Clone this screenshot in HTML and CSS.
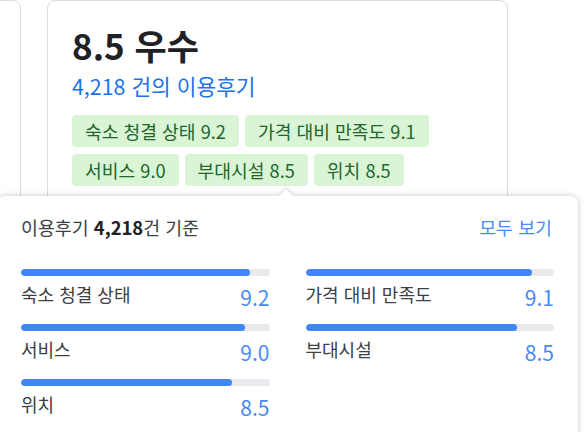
FILE: index.html
```html
<!DOCTYPE html>
<html lang="ko">
<head>
<meta charset="utf-8">
<link rel="stylesheet" href="styles.css">
</head>
<body>
<div class="stage">
  <div class="cards">
    <div class="card card-prev"></div>
    <div class="card card-main">
      <div class="title">8.5 우수</div>
      <div class="count">4,218 건의 이용후기</div>
      <div class="tags">
        <span class="tag">숙소 청결 상태 9.2</span>
        <span class="tag">가격 대비 만족도 9.1</span>
        <span class="tag">서비스 9.0</span>
        <span class="tag">부대시설 8.5</span>
        <span class="tag">위치 8.5</span>
      </div>
    </div>
  </div>

  <div class="popover">
    <div class="arrow"></div>
    <div class="pop-head">
      <div class="basis">이용후기 <b>4,218</b>건 기준</div>
      <a class="see-all">모두 보기</a>
    </div>
    <div class="scores">
      <div class="score">
        <div class="track"><div class="fill" style="width:92%"></div></div>
        <div class="row"><span class="label">숙소 청결 상태</span><span class="value">9.2</span></div>
      </div>
      <div class="score">
        <div class="track"><div class="fill" style="width:91%"></div></div>
        <div class="row"><span class="label">가격 대비 만족도</span><span class="value">9.1</span></div>
      </div>
      <div class="score">
        <div class="track"><div class="fill" style="width:90%"></div></div>
        <div class="row"><span class="label">서비스</span><span class="value">9.0</span></div>
      </div>
      <div class="score">
        <div class="track"><div class="fill" style="width:85%"></div></div>
        <div class="row"><span class="label">부대시설</span><span class="value">8.5</span></div>
      </div>
      <div class="score">
        <div class="track"><div class="fill" style="width:85%"></div></div>
        <div class="row"><span class="label">위치</span><span class="value">8.5</span></div>
      </div>
    </div>
  </div>
</div>
</body>
</html>
```
FILE: styles.css
```css
* { box-sizing: border-box; }
html, body {
  margin: 0;
  padding: 0;
  background: #fff;
  overflow: hidden;
}
body {
  font-family: "Noto Sans CJK KR", "Noto Sans", sans-serif;
  color: #3c4043;
}
.stage {
  position: relative;
  width: 584px;
  height: 432px;
  overflow: hidden;
}
.cards {
  display: flex;
  gap: 26px;
  margin-left: -179px;
}
.card {
  border: 1px solid #dadce0;
  border-radius: 8px;
  background: #fff;
  height: 260px;
}
.card-prev {
  width: 200px;
  flex: none;
}
.card-main {
  width: 461px;
  flex: none;
  padding: 18px 24px 0 24px;
}
.title {
  font-size: 35px;
  font-weight: 700;
  line-height: 52px;
  color: #202124;
}
.count {
  font-size: 21.4px;
  line-height: 30px;
  color: #1a73e8;
}
.tags {
  display: flex;
  flex-wrap: wrap;
  gap: 7px 6px;
  margin-top: 14px;
}
.tag {
  display: inline-flex;
  align-items: center;
  height: 32px;
  padding: 0 13px;
  border-radius: 4px;
  background: #d9f5d6;
  color: #22652b;
  font-size: 18.2px;
}
.popover {
  position: absolute;
  top: 196px;
  left: -3px;
  width: 581px;
  height: 260px;
  background: #fff;
  border-radius: 8px;
  box-shadow: 0 0 6px rgba(0, 0, 0, 0.22);
  padding: 19px 24px 0 24px;
}
.arrow {
  position: absolute;
  top: -5px;
  left: 284px;
  width: 10px;
  height: 10px;
  background: #fff;
  transform: rotate(45deg);
  box-shadow: -2px -2px 3px rgba(0, 0, 0, 0.1);
}
.pop-head {
  position: relative;
  display: flex;
  justify-content: space-between;
  align-items: center;
  font-size: 18.4px;
  line-height: 24px;
  padding-right: 2px;
}
.basis { color: #3c4043; }
.basis b { color: #202124; font-weight: 700; }
.see-all { color: #4a8af4; }
.scores {
  display: grid;
  grid-template-columns: 1fr 1fr;
  column-gap: 36px;
  row-gap: 12px;
  margin-top: 30px;
}
.track {
  height: 7px;
  border-radius: 4px;
  background: #e8eaed;
  overflow: hidden;
}
.fill {
  height: 100%;
  border-radius: 4px;
  background: #4285f4;
}
.row {
  display: flex;
  justify-content: space-between;
  align-items: flex-start;
  margin-top: 6px;
  height: 30px;
}
.label {
  font-size: 18px;
  line-height: 24px;
  color: #3c4043;
}
.value {
  font-size: 21px;
  line-height: 30px;
  color: #4a8af4;
  align-self: flex-end;
}
```
